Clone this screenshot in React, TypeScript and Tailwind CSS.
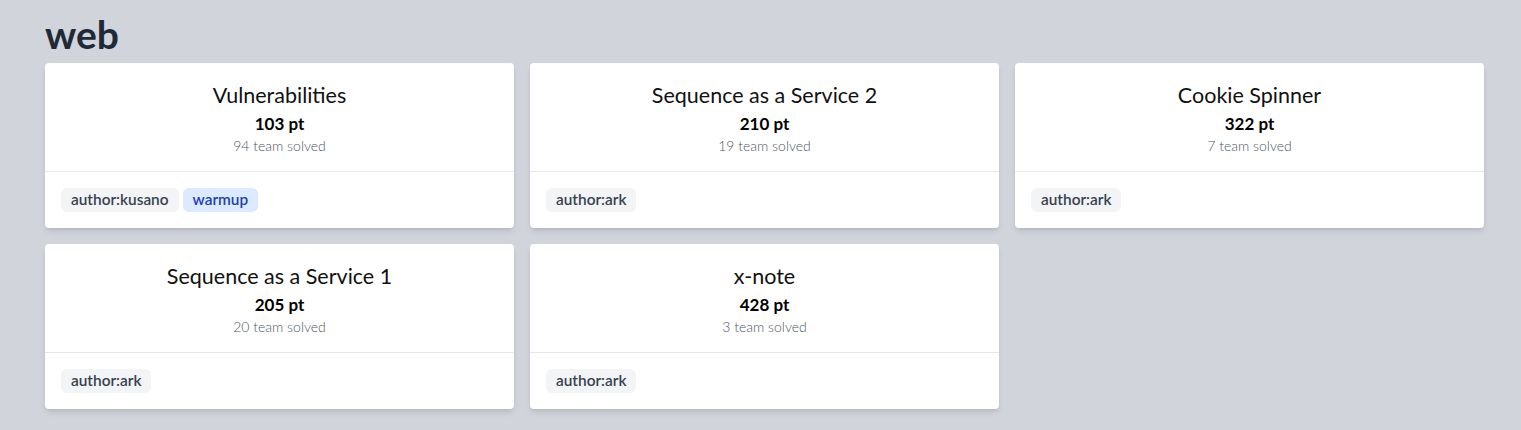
const challenges = [
  { name: 'Vulnerabilities', score: 103, solved: 94, tags: ['author:kusano', 'warmup'] },
  { name: 'Sequence as a Service 2', score: 210, solved: 19, tags: ['author:ark'] },
  { name: 'Cookie Spinner', score: 322, solved: 7, tags: ['author:ark'] },
  { name: 'Sequence as a Service 1', score: 205, solved: 20, tags: ['author:ark'] },
  { name: 'x-note', score: 428, solved: 3, tags: ['author:ark'] },
]

function Tag({ label }: { label: string }) {
  const isWarmup = label === 'warmup'
  return (
    <span
      className={
        'inline-flex h-6 items-center rounded-md px-2.5 text-[15.4px] font-semibold ' +
        (isWarmup ? 'bg-[#dbeafe] text-[#1e40af]' : 'bg-[#f3f4f6] text-[#374151]')
      }
    >
      {label}
    </span>
  )
}

function Card({ name, score, solved, tags }: (typeof challenges)[number]) {
  return (
    <div className="rounded bg-white shadow-md">
      <div className="flex flex-col items-center px-4 pb-[15px] pt-[18px] text-center">
        <div className="mb-[3px] text-[21.5px] leading-7 text-[#111]">{name}</div>
        <div className="text-[17px] font-bold leading-6 text-black">{score} pt</div>
        <div className="text-sm font-light leading-5 text-[#4b5563]">{solved} team solved</div>
      </div>
      <div className="flex gap-1 border-t border-[#e5e7eb] p-4">
        {tags.map((t) => (
          <Tag key={t} label={t} />
        ))}
      </div>
    </div>
  )
}

export default function App() {
  return (
    <div className="min-h-[430px] bg-[#d1d5db] pl-[45px] pt-[14px] font-['Lato',sans-serif]">
      <div className="w-[1439px]">
        <h2 className="mb-[9px] text-[39px] font-bold leading-10 text-[#1f2937]">web</h2>
        <div className="grid grid-cols-3 gap-4">
          {challenges.map((c) => (
            <Card key={c.name} {...c} />
          ))}
        </div>
      </div>
    </div>
  )
}
